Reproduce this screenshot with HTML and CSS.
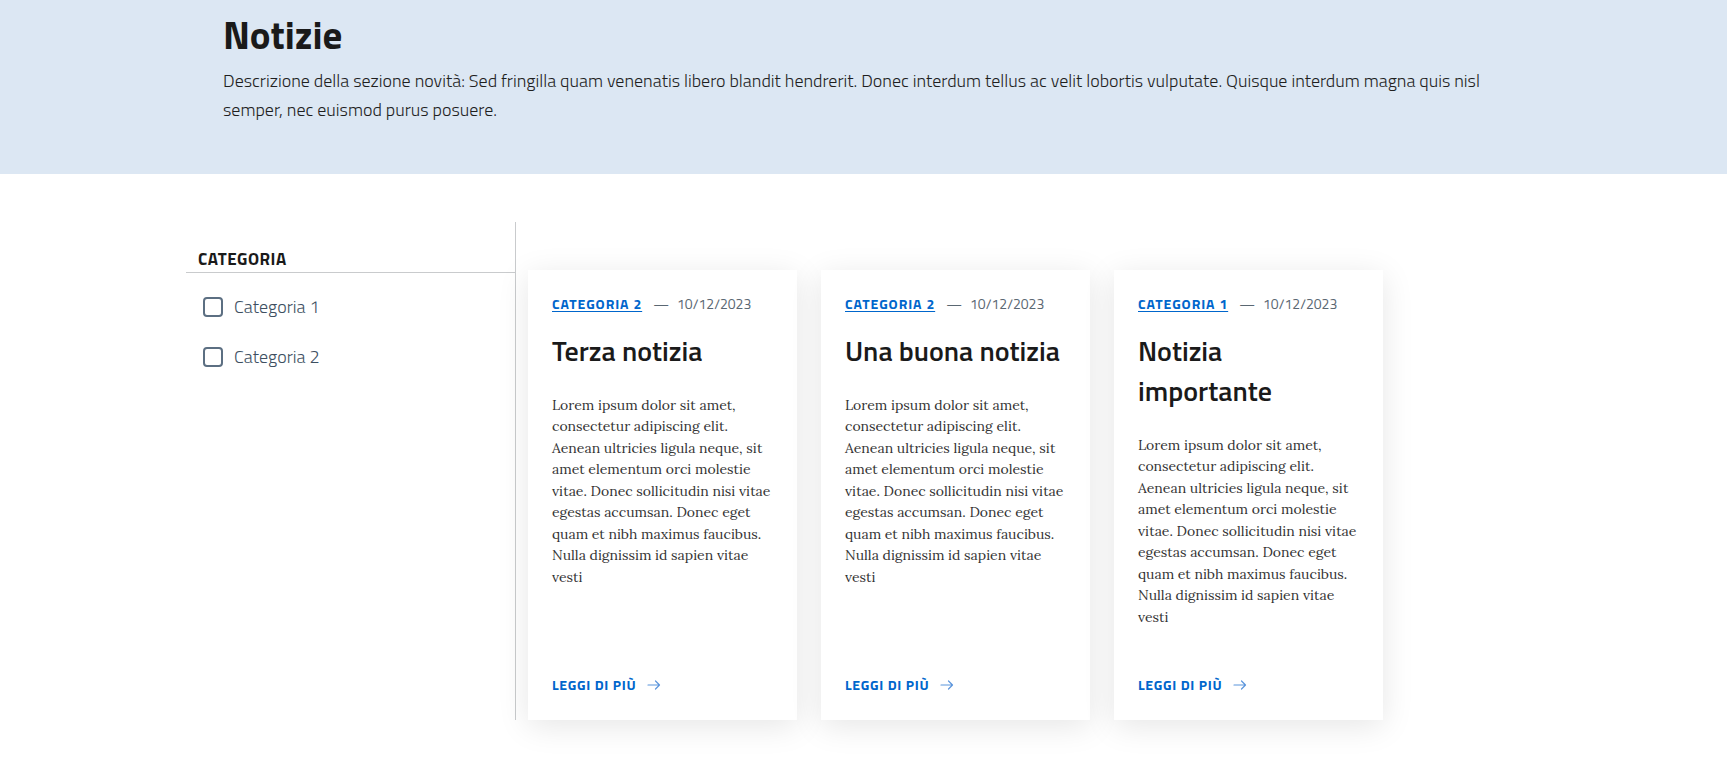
FILE: index.html
```html
<!DOCTYPE html>
<html lang="it">
<head>
<meta charset="utf-8">
<title>Notizie</title>
<link rel="stylesheet" href="styles.css">
</head>
<body>
<header class="hero">
  <div class="hero-inner">
    <h1 class="hero-title">Notizie</h1>
    <p class="hero-desc">Descrizione della sezione novità: Sed fringilla quam venenatis libero blandit hendrerit. Donec interdum tellus ac velit lobortis vulputate. Quisque interdum magna quis nisl semper, nec euismod purus posuere.</p>
  </div>
</header>

<main class="main">
  <aside class="filters">
    <h2 class="filters-title">CATEGORIA</h2>
    <ul class="filter-list">
      <li class="filter-item"><span class="check"></span><span class="filter-label">Categoria 1</span></li>
      <li class="filter-item"><span class="check"></span><span class="filter-label">Categoria 2</span></li>
    </ul>
  </aside>

  <section class="cards">
    <article class="card">
      <div class="card-meta"><a class="cat" href="#">CATEGORIA 2</a><span class="dash">—</span><span class="date">10/12/2023</span></div>
      <h3 class="card-title">Terza notizia</h3>
      <p class="card-text">Lorem ipsum dolor sit amet, consectetur adipiscing elit. Aenean ultricies ligula neque, sit amet elementum orci molestie vitae. Donec sollicitudin nisi vitae egestas accumsan. Donec eget quam et nibh maximus faucibus. Nulla dignissim id sapien vitae vesti</p>
      <a class="more" href="#">LEGGI DI PIÙ <svg class="arrow" viewBox="0 0 14 10" width="14" height="10"><path d="M1 5H12.5M8.5 1L12.5 5L8.5 9"/></svg></a>
    </article>
    <article class="card">
      <div class="card-meta"><a class="cat" href="#">CATEGORIA 2</a><span class="dash">—</span><span class="date">10/12/2023</span></div>
      <h3 class="card-title">Una buona notizia</h3>
      <p class="card-text">Lorem ipsum dolor sit amet, consectetur adipiscing elit. Aenean ultricies ligula neque, sit amet elementum orci molestie vitae. Donec sollicitudin nisi vitae egestas accumsan. Donec eget quam et nibh maximus faucibus. Nulla dignissim id sapien vitae vesti</p>
      <a class="more" href="#">LEGGI DI PIÙ <svg class="arrow" viewBox="0 0 14 10" width="14" height="10"><path d="M1 5H12.5M8.5 1L12.5 5L8.5 9"/></svg></a>
    </article>
    <article class="card">
      <div class="card-meta"><a class="cat" href="#">CATEGORIA 1</a><span class="dash">—</span><span class="date">10/12/2023</span></div>
      <h3 class="card-title">Notizia importante</h3>
      <p class="card-text">Lorem ipsum dolor sit amet, consectetur adipiscing elit. Aenean ultricies ligula neque, sit amet elementum orci molestie vitae. Donec sollicitudin nisi vitae egestas accumsan. Donec eget quam et nibh maximus faucibus. Nulla dignissim id sapien vitae vesti</p>
      <a class="more" href="#">LEGGI DI PIÙ <svg class="arrow" viewBox="0 0 14 10" width="14" height="10"><path d="M1 5H12.5M8.5 1L12.5 5L8.5 9"/></svg></a>
    </article>
  </section>
</main>
</body>
</html>
```
FILE: styles.css
```css
* { box-sizing: border-box; }

body {
  margin: 0;
  background: #fff;
  color: #1a1a1a;
  font-family: "Titillium Web", "PT Sans", Roboto, sans-serif;
}

/* ---------- hero ---------- */
.hero {
  background: #dce7f3;
  padding: 12px 0 49px;
}
.hero-inner {
  max-width: 1281px;
  margin: 0 auto;
}
.hero-title {
  margin: 0;
  font-size: 39px;
  line-height: 46px;
  font-weight: 700;
  color: #1a1a1a;
}
.hero-desc {
  margin: 9px 0 0;
  font-size: 18px;
  line-height: 28.8px;
  font-weight: 300;
  color: #1f1f1f;
}

/* ---------- main ---------- */
.main {
  max-width: 1355px;
  margin: 48px auto 0;
  padding-bottom: 48px;
  display: flex;
  align-items: stretch;
}

.filters {
  width: 330px;
  flex: none;
  border-right: 1px solid #c9cbcd;
}
.filters-title {
  margin: 25px 0 0;
  padding: 0 12px 1px;
  font-size: 17px;
  line-height: 24px;
  font-weight: 700;
  letter-spacing: 0.5px;
  color: #1a1a1a;
  border-bottom: 1px solid #c9cbcd;
}
.filter-list {
  list-style: none;
  margin: 9px 0 0;
  padding: 0;
}
.filter-item {
  height: 50px;
  display: flex;
  align-items: center;
  gap: 11px;
  padding-left: 17px;
}
.check {
  width: 20px;
  height: 20px;
  border: 2px solid #5c6f82;
  border-radius: 4px;
  flex: none;
}
.filter-label {
  font-size: 18px;
  font-weight: 300;
  color: #3d4f61;
}

/* ---------- cards ---------- */
.cards {
  display: grid;
  grid-template-columns: repeat(3, 269px);
  gap: 24px;
  padding: 48px 0 0 12px;
  align-items: stretch;
}
.card {
  height: 450px;
  background: #fff;
  box-shadow: 0 6px 30px rgba(0, 0, 0, 0.1);
  padding: 23px 24px 24px;
  display: flex;
  flex-direction: column;
}
.card-meta {
  display: flex;
  align-items: baseline;
  font-size: 14px;
  line-height: 22px;
}
.cat {
  color: #0066cc;
  font-weight: 700;
  letter-spacing: 0.9px;
  text-decoration: underline;
  text-decoration-thickness: 1px;
  text-underline-offset: 2px;
}
.dash {
  color: #5a6772;
  margin: 0 8px 0 11px;
}
.date {
  color: #5a6772;
}
.card-title {
  margin: 16px 0 0;
  font-size: 28px;
  line-height: 40px;
  font-weight: 600;
  color: #1a1a1a;
}
.card-text {
  margin: 24px 0 0;
  font-family: Lora, "Noto Serif", "DejaVu Serif", serif;
  font-size: 14px;
  line-height: 21.5px;
  color: #333;
}
.more {
  margin-top: auto;
  display: flex;
  align-items: center;
  gap: 11px;
  font-size: 14px;
  line-height: 22px;
  font-weight: 700;
  letter-spacing: 0.7px;
  color: #0066cc;
  text-decoration: none;
}
.arrow {
  fill: none;
  stroke: #5b95dc;
  stroke-width: 1.2;
  stroke-linecap: round;
  stroke-linejoin: round;
}
```
